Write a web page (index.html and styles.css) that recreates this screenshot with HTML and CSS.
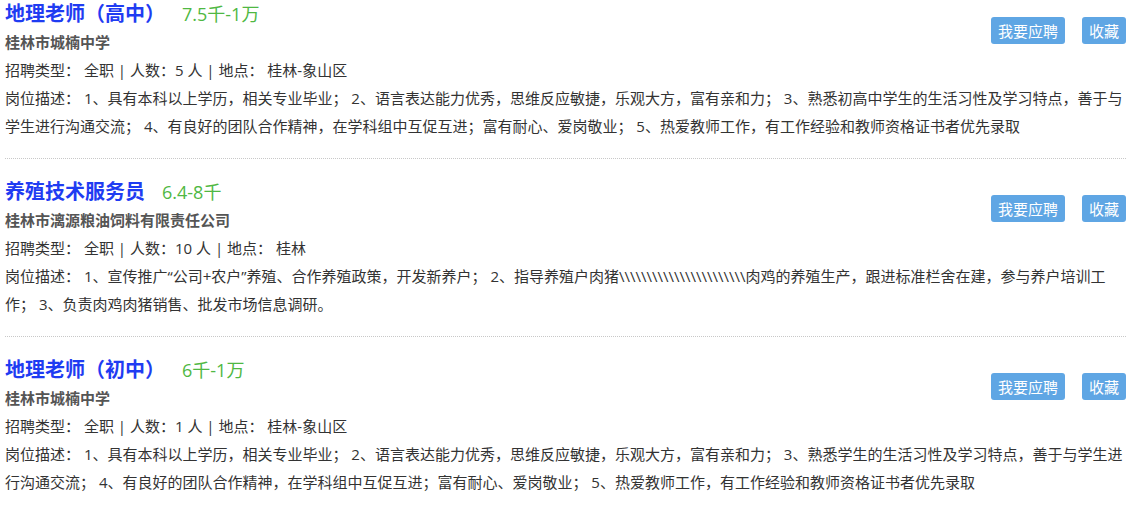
FILE: index.html
```html
<!DOCTYPE html>
<html lang="zh-CN">
<head>
    <meta charset="UTF-8">
    <meta name="viewport" content="width=device-width, initial-scale=1.0">
    <title>招聘信息</title>
    <link rel="stylesheet" href="styles.css">
</head>
<body>
    <div class="job-list">
        <div class="job-item">
            <div class="job-head">
                <div class="job-info">
                    <div class="job-title">
                        <a href="#" class="job-name">地理老师（高中）</a>
                        <span class="job-salary">7.5千-1万</span>
                    </div>
                    <div class="job-company">桂林市城楠中学</div>
                    <div class="job-meta">招聘类型： 全职 | 人数：5 人 | 地点： 桂林-象山区</div>
                </div>
                <div class="job-actions">
                    <button class="btn">我要应聘</button>
                    <button class="btn">收藏</button>
                </div>
            </div>
            <div class="job-desc">岗位描述： 1、具有本科以上学历，相关专业毕业； 2、语言表达能力优秀，思维反应敏捷，乐观大方，富有亲和力； 3、熟悉初高中学生的生活习性及学习特点，善于与学生进行沟通交流； 4、有良好的团队合作精神，在学科组中互促互进；富有耐心、爱岗敬业； 5、热爱教师工作，有工作经验和教师资格证书者优先录取</div>
        </div>

        <div class="job-item">
            <div class="job-head">
                <div class="job-info">
                    <div class="job-title">
                        <a href="#" class="job-name">养殖技术服务员</a>
                        <span class="job-salary">6.4-8千</span>
                    </div>
                    <div class="job-company">桂林市漓源粮油饲料有限责任公司</div>
                    <div class="job-meta">招聘类型： 全职 | 人数：10 人 | 地点： 桂林</div>
                </div>
                <div class="job-actions">
                    <button class="btn">我要应聘</button>
                    <button class="btn">收藏</button>
                </div>
            </div>
            <div class="job-desc">岗位描述： 1、宣传推广“公司+农户”养殖、合作养殖政策，开发新养户； 2、指导养殖户肉猪\\\\\\\\\\\\\\\\\\\\\\\肉鸡的养殖生产，跟进标准栏舍在建，参与养户培训工作； 3、负责肉鸡肉猪销售、批发市场信息调研。</div>
        </div>

        <div class="job-item">
            <div class="job-head">
                <div class="job-info">
                    <div class="job-title">
                        <a href="#" class="job-name">地理老师（初中）</a>
                        <span class="job-salary">6千-1万</span>
                    </div>
                    <div class="job-company">桂林市城楠中学</div>
                    <div class="job-meta">招聘类型： 全职 | 人数：1 人 | 地点： 桂林-象山区</div>
                </div>
                <div class="job-actions">
                    <button class="btn">我要应聘</button>
                    <button class="btn">收藏</button>
                </div>
            </div>
            <div class="job-desc">岗位描述： 1、具有本科以上学历，相关专业毕业； 2、语言表达能力优秀，思维反应敏捷，乐观大方，富有亲和力； 3、熟悉学生的生活习性及学习特点，善于与学生进行沟通交流； 4、有良好的团队合作精神，在学科组中互促互进；富有耐心、爱岗敬业； 5、热爱教师工作，有工作经验和教师资格证书者优先录取</div>
        </div>
    </div>
</body>
</html>
```

FILE: styles.css
```css
body {
    margin: 0;
    font-family: "Open Sans", "Noto Sans CJK SC", sans-serif;
    font-size: 15px;
    color: #333;
    background-color: #fff;
}

/* 列表被滚动过一点，第一条顶部在视口外 */
.job-list {
    margin-top: -19px;
    padding: 0 11px 0 5px;
}

.job-item {
    padding: 18px 0;
    border-bottom: 1px dotted #c8c8c8;
}

.job-head {
    display: flex;
    justify-content: space-between;
    align-items: flex-start;
}

.job-title {
    display: flex;
    align-items: baseline;
    gap: 17px;
    line-height: 28px;
}

.job-name {
    font-family: "Noto Sans CJK SC", sans-serif;
    font-size: 20px;
    font-weight: bold;
    color: #1f3cf2;
    text-decoration: none;
}

.job-salary {
    font-size: 18px;
    color: #4fb843;
}

.job-company {
    font-family: "Noto Sans CJK SC", sans-serif;
    font-weight: bold;
    color: #555;
    line-height: 28px;
}

.job-meta {
    line-height: 28px;
}

.job-actions {
    display: flex;
    gap: 17px;
    margin-top: 18px;
}

.btn {
    height: 27px;
    padding: 0 7px;
    font-family: "Noto Sans CJK SC", sans-serif;
    font-size: 15px;
    color: #fff;
    background-color: #5fa6e4;
    border: none;
    border-radius: 3px;
    cursor: pointer;
}

.btn:hover {
    background-color: #4a94d6;
}

.job-desc {
    line-height: 28px;
}
```
